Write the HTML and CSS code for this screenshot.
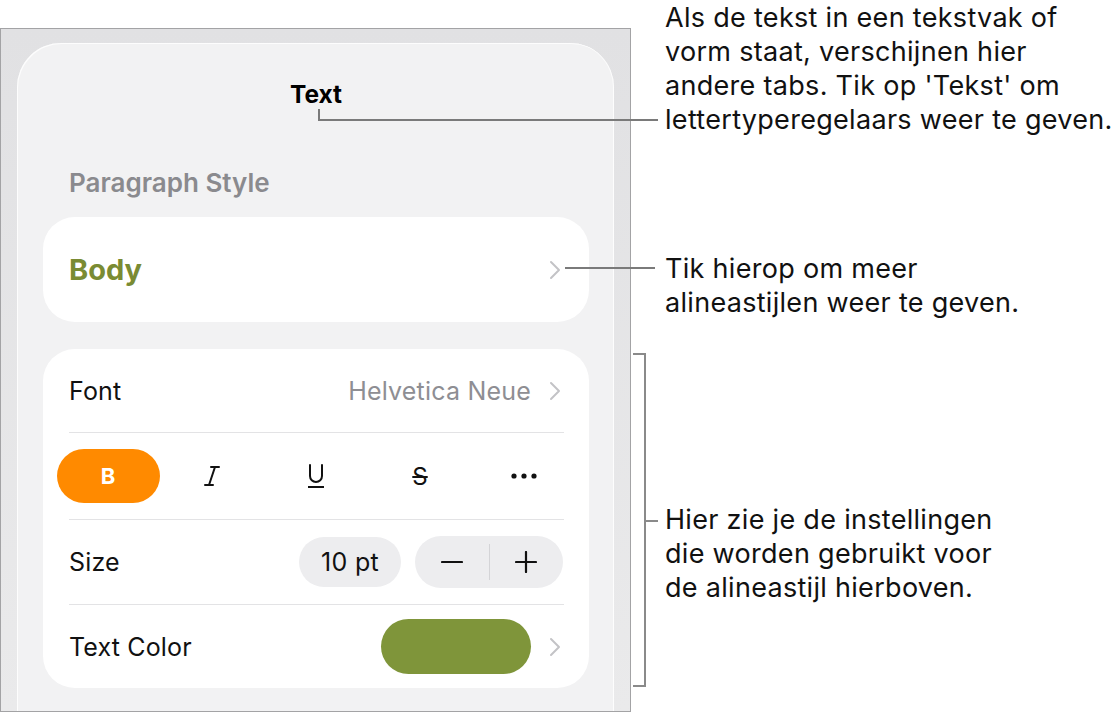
FILE: index.html
```html
<!DOCTYPE html>
<html lang="nl">
<head>
<meta charset="utf-8">
<title>Text</title>
<link rel="stylesheet" href="styles.css">
</head>
<body>
<div class="canvas">
  <div class="frame">
    <div class="sheet">
      <div class="title">Text</div>
      <div class="section-label">Paragraph Style</div>
      <div class="card style-card">
        <span class="style-name">Body</span>
        <svg class="chev" width="12" height="20" viewBox="0 0 12 20"><path d="M2 2 L10 10 L2 18" fill="none" stroke="#c3c3c6" stroke-width="2" stroke-linecap="round" stroke-linejoin="round"/></svg>
      </div>
      <div class="card settings">
        <div class="row font-row">
          <span class="row-label">Font</span>
          <span class="row-right">
            <span class="value">Helvetica Neue</span>
            <svg class="chev" width="12" height="20" viewBox="0 0 12 20"><path d="M2 2 L10 10 L2 18" fill="none" stroke="#c3c3c6" stroke-width="2" stroke-linecap="round" stroke-linejoin="round"/></svg>
          </span>
        </div>
        <div class="sep"></div>
        <div class="row buttons-row">
          <div class="cell"><span class="bold-btn">B</span></div>
          <div class="cell">
            <svg width="20" height="22" viewBox="0 0 20 22"><path d="M9 2 H17 M3 20 H11 M13 2 L7 20" fill="none" stroke="#111" stroke-width="2" stroke-linecap="round"/></svg>
          </div>
          <div class="cell">
            <svg width="18" height="26" viewBox="0 0 18 26"><path d="M3 2 V13 A6 6 0 0 0 15 13 V2" fill="none" stroke="#111" stroke-width="2" stroke-linecap="round"/><path d="M1 24 H17" stroke="#111" stroke-width="2"/></svg>
          </div>
          <div class="cell"><span class="strike">S</span></div>
          <div class="cell">
            <svg width="26" height="6" viewBox="0 0 26 6"><circle cx="3" cy="3" r="2.6" fill="#111"/><circle cx="13" cy="3" r="2.6" fill="#111"/><circle cx="23" cy="3" r="2.6" fill="#111"/></svg>
          </div>
        </div>
        <div class="sep"></div>
        <div class="row size-row">
          <span class="row-label">Size</span>
          <span class="row-right">
            <span class="size-pill">10 pt</span>
            <span class="stepper">
              <span class="step"><svg width="22" height="22" viewBox="0 0 22 22"><path d="M1 11 H21" stroke="#111" stroke-width="2.2" stroke-linecap="round"/></svg></span>
              <span class="step-div"></span>
              <span class="step"><svg width="22" height="22" viewBox="0 0 22 22"><path d="M1 11 H21 M11 1 V21" stroke="#111" stroke-width="2.2" stroke-linecap="round"/></svg></span>
            </span>
          </span>
        </div>
        <div class="sep"></div>
        <div class="row color-row">
          <span class="row-label">Text Color</span>
          <span class="row-right">
            <span class="color-pill"></span>
            <svg class="chev" width="12" height="20" viewBox="0 0 12 20"><path d="M2 2 L10 10 L2 18" fill="none" stroke="#c3c3c6" stroke-width="2" stroke-linecap="round" stroke-linejoin="round"/></svg>
          </span>
        </div>
      </div>
    </div>
  </div>

  <p class="callout callout-tabs">Als de tekst in een tekstvak of<br>vorm staat, verschijnen hier<br>andere tabs. Tik op 'Tekst' om<br>lettertyperegelaars weer te geven.</p>
  <p class="callout callout-styles">Tik hierop om meer<br>alineastijlen weer te geven.</p>
  <p class="callout callout-settings">Hier zie je de instellingen<br>die worden gebruikt voor<br>de alineastijl hierboven.</p>

  <svg class="leaders" width="1120" height="713" viewBox="0 0 1120 713">
    <path d="M319 109 V120 H658" fill="none" stroke="#7a7a7a" stroke-width="2"/>
    <path d="M565 268 H655" fill="none" stroke="#7a7a7a" stroke-width="2"/>
    <path d="M633 354 H645 V686 H633 M645 521 H658" fill="none" stroke="#8a8a8a" stroke-width="2"/>
  </svg>
</div>
</body>
</html>
```

FILE: styles.css
```css
* { box-sizing: border-box; }

html, body {
  margin: 0;
  padding: 0;
  background: #ffffff;
}

body {
  font-family: Inter, "Noto Sans", "Liberation Sans", sans-serif;
  color: #111111;
}

.canvas {
  position: relative;
  width: 1120px;
  height: 713px;
  overflow: hidden;
  padding-top: 28px;
}

.frame {
  width: 631px;
  height: 684px;
  border: 1px solid #a3a3a5;
  background: linear-gradient(180deg, #e1e1e3 0%, #eaeaeb 100%);
  padding: 14px 16px 0 16px;
  overflow: hidden;
}

.sheet {
  height: 100%;
  background: #f2f2f3;
  border-radius: 44px 44px 0 0;
  padding: 36px 25px 0 26px;
  box-shadow: inset 1px 1px 0 rgba(255,255,255,0.8), inset -1px 0 0 rgba(255,255,255,0.8);
}

.title {
  text-align: center;
  font-weight: 700;
  font-size: 24.5px;
  line-height: 30px;
  color: #000;
}

.section-label {
  margin-top: 59px;
  padding-left: 26px;
  font-size: 26px;
  font-weight: 600;
  line-height: 30px;
  color: #8a8a8e;
}

.card {
  background: #ffffff;
  border-radius: 32px;
}

.style-card {
  margin-top: 19px;
  height: 105px;
  display: flex;
  align-items: center;
  justify-content: space-between;
  padding: 0 28px 0 26px;
}

.style-name {
  font-size: 29px;
  font-weight: 700;
  color: #7a8b33;
}

.chev { display: block; flex: none; }

.settings {
  margin-top: 27px;
  height: 339px;
}

.row {
  display: flex;
  align-items: center;
  justify-content: space-between;
  padding: 0 28px 0 26px;
}

.row-label {
  font-size: 25px;
  line-height: 30px;
  letter-spacing: 0.15px;
  color: #111;
}

.row-right {
  display: flex;
  align-items: center;
}

.sep {
  height: 1px;
  background: #e3e3e5;
  margin: 0 25px 0 26px;
}

.font-row { height: 83px; }

.value {
  font-size: 25px;
  letter-spacing: 0.2px;
  color: #8e8e93;
  margin-right: 18px;
}

.buttons-row {
  height: 86px;
  padding: 0 13px;
  justify-content: flex-start;
}

.cell {
  width: 104px;
  display: flex;
  justify-content: center;
  align-items: center;
}

.bold-btn {
  width: 103px;
  height: 54px;
  border-radius: 27px;
  background: #ff8a00;
  color: #ffffff;
  font-weight: 700;
  font-size: 22px;
  display: flex;
  align-items: center;
  justify-content: center;
}

.strike {
  font-size: 24px;
  text-decoration: line-through;
  text-decoration-thickness: 2px;
  color: #111;
}

.size-row {
  height: 84px;
  padding-right: 26px;
}

.size-pill {
  width: 102px;
  height: 50px;
  border-radius: 25px;
  background: #ededef;
  font-size: 25px;
  letter-spacing: 0.3px;
  display: flex;
  align-items: center;
  justify-content: center;
  margin-right: 14px;
}

.stepper {
  width: 148px;
  height: 52px;
  border-radius: 26px;
  background: #ededef;
  display: flex;
  align-items: center;
}

.step {
  flex: 1;
  display: flex;
  align-items: center;
  justify-content: center;
}

.step svg { display: block; }

.step-div {
  width: 1px;
  height: 36px;
  background: #d4d4d7;
}

.color-row { height: 83px; }

.color-pill {
  width: 150px;
  height: 55px;
  border-radius: 28px;
  background: #7f953a;
  margin-right: 18px;
}

.callout {
  position: absolute;
  left: 665px;
  margin: 0;
  font-size: 27px;
  line-height: 34px;
  letter-spacing: 0.3px;
  color: #111;
  white-space: nowrap;
}

.callout-tabs { top: 1px; }
.callout-styles { top: 252px; }
.callout-settings { top: 503px; }

.leaders {
  position: absolute;
  left: 0;
  top: 0;
  pointer-events: none;
}
```
